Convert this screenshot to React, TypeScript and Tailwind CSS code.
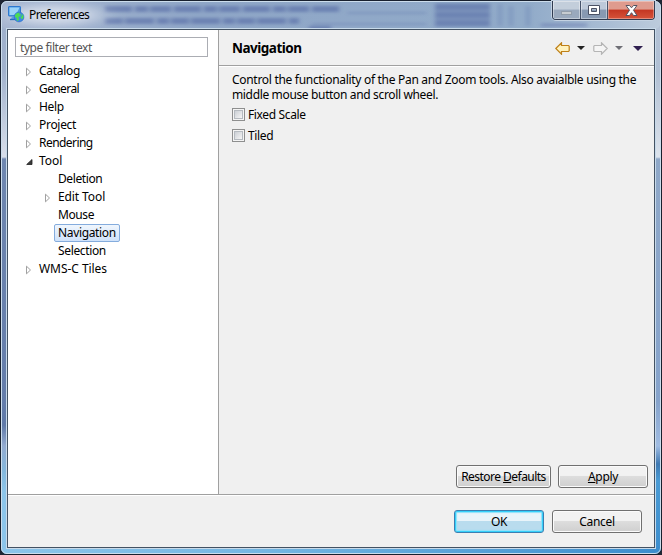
import React from "react";

const RowArrow = ({ open = false }: { open?: boolean }) => (
  <svg width="8" height="10" viewBox="0 0 8 10" className="mt-[2px] shrink-0">
    {open ? (
      <path d="M7 2.5V7.5H1.7Z" fill="#3b3b3b" stroke="#1e1e1e" strokeWidth="0.8" />
    ) : (
      <path d="M1.5 1.2V8.8L5.5 5Z" fill="#fff" stroke="#a0a0a0" />
    )}
  </svg>
);

type Item = { label: string; level: number; arrow?: "open" | "closed"; selected?: boolean; cls: string };

const items: Item[] = [
  { label: "Catalog", level: 0, arrow: "closed", cls: "tracking-[-0.3px]" },
  { label: "General", level: 0, arrow: "closed", cls: "tracking-[-0.6px]" },
  { label: "Help", level: 0, arrow: "closed", cls: "tracking-[-0.3px]" },
  { label: "Project", level: 0, arrow: "closed", cls: "tracking-[-0.3px]" },
  { label: "Rendering", level: 0, arrow: "closed", cls: "tracking-[-0.55px]" },
  { label: "Tool", level: 0, arrow: "open", cls: "tracking-[0px]" },
  { label: "Deletion", level: 1, cls: "tracking-[-0.4px]" },
  { label: "Edit Tool", level: 1, arrow: "closed", cls: "tracking-[-0.1px]" },
  { label: "Mouse", level: 1, cls: "tracking-[-0.4px]" },
  { label: "Navigation", level: 1, selected: true, cls: "tracking-[-0.35px]" },
  { label: "Selection", level: 1, cls: "tracking-[-0.35px]" },
  { label: "WMS-C Tiles", level: 0, arrow: "closed", cls: "tracking-[-0.05px]" },
];

const Tree = () => (
  <ul className="mt-[5px]">
    {items.map((it) => (
      <li key={it.label} className={`flex h-[18px] items-center ${it.level ? "pl-[36px]" : "pl-[17px]"}`}>
        <span className="flex w-[10px]">{it.arrow && <RowArrow open={it.arrow === "open"} />}</span>
        <span
          className={`flex h-[18px] items-center rounded-[2px] border px-[3px] pb-[2px] whitespace-nowrap ${it.cls} ${
            it.selected ? "w-[66px] border-[#84acdd] bg-linear-to-b from-[#f0f6fd] to-[#cfe2fa]" : "border-transparent"
          }`}
        >
          {it.label}
        </span>
      </li>
    ))}
  </ul>
);

const Check = ({ label }: { label: string }) => (
  <label className="flex h-[21px] items-center gap-[3px] tracking-[-0.36px]">
    <span className="flex size-[13px] items-center justify-center border border-[#8e8f8f] bg-[#f4f4f4]">
      <span className="size-[9px] border border-[#b5bac0] bg-linear-to-br from-[#cbcfd5] to-[#f6f6f6]" />
    </span>
    {label}
  </label>
);

const Button = ({ children, cls, primary = false }: { children: React.ReactNode; cls: string; primary?: boolean }) => (
  <button
    className={`flex h-[23px] items-center justify-center rounded-[3px] border ${cls} ${
      primary
        ? "border-[#3c7fb1] bg-linear-to-b from-[#e9f4fa] from-50% to-[#b9dcee] to-50% shadow-[inset_0_0_0_1px_#35d0fa,inset_0_0_1px_2px_#8fe2fa]"
        : "border-[#707070] bg-linear-to-b from-[#f2f2f2] from-45% via-[#dddddd] via-50% to-[#cfcfcf] shadow-[inset_0_0_0_1px_#fbfbfb]"
    }`}
  >
    {children}
  </button>
);

const AppIcon = () => (
  <svg width="17" height="17" viewBox="0 0 17 17" className="shrink-0">
    <rect x="0.5" y="0.5" width="12" height="9.5" rx="0.6" fill="#4d97e0" stroke="#2c78cf" />
    <path d="M1.5 1.5H11.5L8 9H1.5Z" fill="#9ad3f9" />
    <path d="M4 10.5H8V13H3Z" fill="#5d9fe2" />
    <path d="M2 13.5H8" stroke="#276bbd" strokeWidth="1.3" />
    <circle cx="11" cy="11" r="4.9" fill="#3f87e4" stroke="#286dc2" strokeWidth="0.6" />
    <path d="M7 9L9 7L12 6.4L11 8L13 8.5L12.5 10L10.5 11L11 14L9 15L8.5 12L7 11ZM13.5 7.5L15.7 10L14.8 13L13 12.5L12.5 11L14 10Z" fill="#4bdc55" />
  </svg>
);

const Arrow = ({ muted = false }: { muted?: boolean }) => (
  <svg width="15" height="13" viewBox="0 0 15 13" className={muted ? "-scale-x-100" : ""}>
    <path
      d="M0.8 6.5L6.5 0.8V3.5H13.5L14.2 4.2V8.8L13.5 9.5H6.5V12.2Z"
      fill={muted ? "#f5f5f5" : "#fff2bd"}
      stroke={muted ? "#b5b5b5" : "#bf8018"}
      strokeWidth="1.2"
    />
  </svg>
);

const Caret = ({ color, big = false }: { color: string; big?: boolean }) => (
  <svg width={big ? 10 : 8} height={big ? 5 : 4} viewBox="0 0 8 4">
    <path d="M0 0H8L4 4Z" fill={color} />
  </svg>
);

const GlassTitle = () => (
  <svg className="absolute top-px left-px" width="658" height="27" viewBox="1 1 658 27">
    <defs>
      <filter id="soft" x="-10%" y="-50%" width="120%" height="200%">
        <feGaussianBlur stdDeviation="2 1.5" />
      </filter>
      <filter id="wide" x="-30%" y="-80%" width="160%" height="260%">
        <feGaussianBlur stdDeviation="13 5" />
      </filter>
      <linearGradient id="bar">
        <stop offset="0" stopColor="#a5b5d0" />
        <stop offset="0.3" stopColor="#8fa6c7" />
        <stop offset="0.8" stopColor="#91abc9" />
        <stop offset="0.92" stopColor="#a9bdd4" />
        <stop offset="1" stopColor="#bccbdc" />
      </linearGradient>
    </defs>
    <rect x="1" y="1" width="658" height="27" rx="5" fill="url(#bar)" />
    <g filter="url(#soft)" stroke="#5f74aa" strokeWidth="6" opacity="0.7">
      <path d="M104 8H338" strokeDasharray="27 3 13 2 21 3" />
      <path d="M104 20H298" strokeDasharray="18 2 29 3 12 2" />
      <path d="M308 28H330" />
      <path d="M347 12H425M311 23H425" strokeWidth="2" opacity="0.5" />
      <path d="M434 6H489M434 14H489M434 22H489" strokeWidth="7" />
      <path d="M499 3V25M510 5V25M527 5V25" strokeWidth="4" opacity="0.45" />
      <path d="M540 24H586" strokeWidth="4" opacity="0.6" />
    </g>
    <ellipse cx="54" cy="14" rx="46" ry="10" fill="#e4e9f2" opacity="0.8" filter="url(#wide)" />
  </svg>
);

export default function App() {
  return (
    <div className="h-[555px] w-[662px] overflow-hidden bg-[#202634] font-['Noto_Sans','Open_Sans',sans-serif] text-[12px] leading-[15px] text-black">
      <div
        className="relative flex h-[555px] w-[662px] flex-col rounded-[7px] border border-[#18202e]
        bg-[linear-gradient(90deg,#8cc5ea,#74b6e2_40%,#3c8dcd),linear-gradient(180deg,#9dafcb_0px,#a1b2cd_70px,#d8deea_156px,#6f87b0_158px,#647dab_400px,#5f79a8_424px,#93abd0_445px,#84b8dd_470px,#8cc5ea_490px),linear-gradient(180deg,#b4c3d6_0px,#b0bfd3_70px,#dce3ec_156px,#8fa8c8_158px,#86a3cb_400px,#a0bce2_445px,#3f79b2_463px,#4a9bd5_480px,#3c8dcd_554px)]
        bg-size-[100%_7px,50%_100%,50%_100%] bg-position-[0_100%,0_0,100%_0] bg-no-repeat"
      >
        <GlassTitle />
        <div className="absolute inset-0 rounded-[6px] border border-[#ccddec]" />
        <header className="relative flex h-[28px] shrink-0 items-start justify-between pl-[7px]">
          <div className="flex items-center gap-[4px] pt-[5px]">
            <AppIcon />
            <span className="tracking-[-0.6px]">Preferences</span>
          </div>
          <div className="mr-[6px] flex h-[19px] w-[103px] overflow-hidden rounded-b-[4px] border border-t-0 border-[#303b50] shadow-[0_0_0_1px_#c4d2e2]">
            <div className="flex w-[28px] items-center justify-center border-r border-[#46536a] bg-linear-to-b from-[#c3cedb] from-45% to-[#9aa9bd] to-50% shadow-[inset_0_0_0_1px_#ffffff66]">
              <span className="mt-[5px] h-[4px] w-[11px] border border-[#929daa] bg-[#c7ccd1]" />
            </div>
            <div className="flex w-[27px] items-center justify-center border-r border-[#46536a] bg-linear-to-b from-[#bdc9d9] from-45% to-[#8799b2] to-50% shadow-[inset_0_0_0_1px_#ffffff66]">
              <svg width="12" height="10" viewBox="0 0 12 10">
                <path fillRule="evenodd" d="M0.5 0.5H11.5V9.5H0.5ZM3.5 3.5V6.5H8.5V3.5Z" fill="#fff" stroke="#4b5265" />
              </svg>
            </div>
            <div className="flex flex-1 items-center justify-center bg-linear-to-b from-[#df9b8e] from-45% via-[#c43622] via-50% to-[#d6533a] shadow-[inset_0_0_0_1px_#ffffff55]">
              <svg width="13" height="11" viewBox="0 0 13 11">
                <path d="M1 0.5H4.5L6.5 2.8L8.5 0.5H12L8.5 5.2L12 10.5H8.5L6.5 7.7L4.5 10.5H1L4.5 5.2Z" fill="#fff" stroke="#535563" />
              </svg>
            </div>
          </div>
        </header>
        <main className="relative mx-[6px] flex h-[519px] flex-col border border-[#435263] bg-[#f0f0f0] shadow-[0_0_0_1px_#c8daea]">
          <div className="flex h-[464px] shrink-0">
            <aside className="w-[211px] shrink-0 border-r border-[#a0a0a0] bg-white pt-[7px]">
              <div className="ml-[7px] flex h-[20px] w-[193px] items-center border border-[#abadb3] pl-[4px] text-[#555]">
                <span className="tracking-[-0.43px]">type filter text</span>
              </div>
              <Tree />
            </aside>
            <section className="flex flex-1 flex-col">
              <div className="flex h-[36px] shrink-0 items-center justify-between border-b border-[#a0a0a0] pr-[11px] pl-[13px] shadow-[0_1px_0_#fff]">
                <h1 className="pt-[2px] text-[13.5px] font-bold tracking-[-0.5px]">Navigation</h1>
                <div className="flex items-center pt-px">
                  <Arrow />
                  <span className="ml-[7px] flex"><Caret color="#222" /></span>
                  <span className="ml-[8px] flex"><Arrow muted /></span>
                  <span className="ml-[7px] flex"><Caret color="#6f6f76" /></span>
                  <span className="ml-[10px] flex"><Caret color="#302050" big /></span>
                </div>
              </div>
              <div className="pt-[6px] pl-[13px]">
                <div className="whitespace-nowrap">
                  <p className="h-[15px] tracking-[-0.3px]">
                    Control the functionality of the Pan and Zoom tools. Also avaialble using the
                  </p>
                  <p className="h-[15px] tracking-[-0.35px]">middle mouse button and scroll wheel.</p>
                </div>
                <div className="mt-[2px]">
                  <Check label="Fixed Scale" />
                  <Check label="Tiled" />
                </div>
              </div>
              <div className="mt-auto mr-[6px] mb-[6px] flex justify-end gap-[7px]">
                <Button cls="w-[95px] tracking-[-0.53px]">
                  <span className="whitespace-nowrap">Restore <u>D</u>efaults</span>
                </Button>
                <Button cls="w-[90px] tracking-[-0.3px]">
                  <span><u>A</u>pply</span>
                </Button>
              </div>
            </section>
          </div>
          <footer className="flex flex-1 items-start justify-end gap-[8px] border-t border-[#a0a0a0] pt-[15px] pr-[12px] shadow-[inset_0_1px_0_#fff]">
            <Button cls="w-[90px] tracking-[-0.3px]" primary>OK</Button>
            <Button cls="w-[90px] tracking-[-0.3px]">Cancel</Button>
          </footer>
        </main>
      </div>
    </div>
  );
}
